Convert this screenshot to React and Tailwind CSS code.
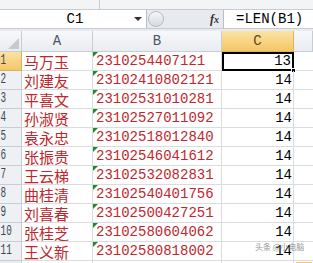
const rows = [
  ["马万玉", 13],
  ["刘建友", 14],
  ["平喜文", 14],
  ["孙淑贤", 14],
  ["袁永忠", 14],
  ["张振贵", 14],
  ["王云梯", 14],
  ["曲桂清", 14],
  ["刘喜春", 14],
  ["张桂芝", 14],
  ["王义新", 14],
];

const bNums = [
  "2310254407121",
  "23102410802121",
  "23102531010281",
  "23102527011092",
  "23102518012840",
  "23102546041612",
  "23102532082831",
  "23102540401756",
  "23102500427251",
  "23102580604062",
  "23102580818002",
];

const cjk = { fontFamily: '"Noto Sans CJK SC", sans-serif' };
const mono = { fontFamily: '"Liberation Mono", monospace' };

function HeaderCell({ children, active }) {
  return (
    <div
      className={
        "h-[21px] flex items-center justify-center border-r border-b text-[14px] " +
        (active
          ? "bg-gradient-to-b from-[#fbe3a4] to-[#f3c765] border-[#d9b25a] text-[#5a4a20]"
          : "bg-gradient-to-b from-[#f7f8fa] to-[#e9ecf0] border-[#c9cdd3] text-[#4a5668]")
      }
      style={mono}
    >
      {children}
    </div>
  );
}

function Row({ idx, name, num, len }) {
  const first = idx === 0;
  return (
    <>
      <div
        className={
          "h-[19px] border-r border-b flex items-center " +
          (first
            ? "bg-gradient-to-b from-[#fbe3a4] to-[#f3c765] border-[#d9b25a]"
            : "bg-[#eef0f3] border-[#c9cdd3]")
        }
      >
        <span className="inline-block origin-left scale-x-[0.62] text-[15px] text-[#38475a] pl-[1px]" style={mono}>
          {idx + 1}
        </span>
      </div>
      <div className="h-[19px] border-r border-b border-[#dadcdd] flex items-center pl-[2px] text-[15px] text-[#c0272d] leading-none" style={cjk}>
        {name}
      </div>
      <div className="h-[19px] border-r border-b border-[#dadcdd] flex items-center pl-[3px] text-[14px] text-[#c0272d] relative" style={mono}>
        <span className="absolute left-0 top-0 w-0 h-0 border-t-[5px] border-r-[5px] border-t-[#1e8a2e] border-r-transparent" />
        {num}
      </div>
      <div
        className={
          "h-[19px] flex items-center justify-end pr-[1px] text-[14px] text-black relative " +
          (first ? "border-2 border-black" : "border-r border-b border-[#dadcdd]")
        }
        style={mono}
      >
        {len}
        {first && <span className="absolute -right-[4px] -bottom-[4px] w-[5px] h-[5px] bg-black border border-white" />}
      </div>
      <div className="h-[19px] border-b border-[#dadcdd]" />
    </>
  );
}

export default function App() {
  return (
    <div className="relative w-[313px] h-[263px] overflow-hidden bg-white select-none">
      {/* top strip */}
      <div className="h-[10px] flex border-b border-[#c8ccd2] bg-[#f3f4f6]">
        <div className="w-[100px] border-r border-[#c8ccd2]" />
        <div className="flex-1" />
      </div>

      {/* formula bar */}
      <div className="h-[19px] flex bg-[#e7eaee] border-b border-[#c8ccd2]">
        <div className="w-[147px] bg-white flex items-center relative border-r border-[#b9bec6]">
          <span className="flex-1 text-center text-[14px] text-black pl-[4px]" style={mono}>C1</span>
          <span className="absolute left-[134px] top-[7px] w-0 h-0 border-l-[4px] border-r-[4px] border-t-[4px] border-l-transparent border-r-transparent border-t-[#333]" />
        </div>
        <div className="w-[76px] flex items-center">
          <div className="ml-[1px] w-[16px] h-[16px] rounded-full bg-gradient-to-b from-[#f5f6f8] to-[#d6dae0] border border-[#b7bcc4]" />
          <span className="ml-auto mr-[4px] text-[12px] italic font-bold text-[#333]" style={{ fontFamily: '"Liberation Serif", serif' }}>
            f<span className="text-[10px]">x</span>
          </span>
        </div>
        <div className="flex-1 bg-white border-l border-[#b9bec6] flex items-center pl-[12px] text-[14px] text-black" style={mono}>
          =LEN(B1)
        </div>
      </div>

      <div className="h-[2px] bg-[#e7eaee]" />

      {/* sheet */}
      <div className="grid grid-cols-[22px_71px_129px_72px_1fr]">
        <div className="h-[21px] border-r border-b border-[#c9cdd3] bg-gradient-to-b from-[#f7f8fa] to-[#e9ecf0] relative">
          <span className="absolute right-[2px] bottom-[2px] w-0 h-0" style={{ borderBottom: "11px solid #c5cad1", borderLeft: "11px solid transparent" }} />
        </div>
        <HeaderCell>A</HeaderCell>
        <HeaderCell>B</HeaderCell>
        <HeaderCell active>C</HeaderCell>
        <HeaderCell>{""}</HeaderCell>

        {rows.map((r, i) => (
          <Row key={i} idx={i} name={r[0]} num={bNums[i]} len={r[1]} />
        ))}
        <div className="h-[19px] border-r border-[#c9cdd3] bg-[#e9ecf0]" />
        <div className="h-[19px] border-r border-[#dadcdd]" />
        <div className="h-[19px] border-r border-[#dadcdd]" />
        <div className="h-[19px] border-r border-[#dadcdd]" />
        <div className="h-[19px] relative">
          <div className="absolute left-[2px] top-[1px] w-[16px] h-[2px] bg-[#f3c765]" />
        </div>
      </div>

      {/* watermark */}
      <div className="absolute left-[255px] top-[243px] text-[8px] leading-none text-[#7a7a7a] opacity-80 whitespace-nowrap" style={cjk}>
        头条 @小电脑
      </div>
    </div>
  );
}
